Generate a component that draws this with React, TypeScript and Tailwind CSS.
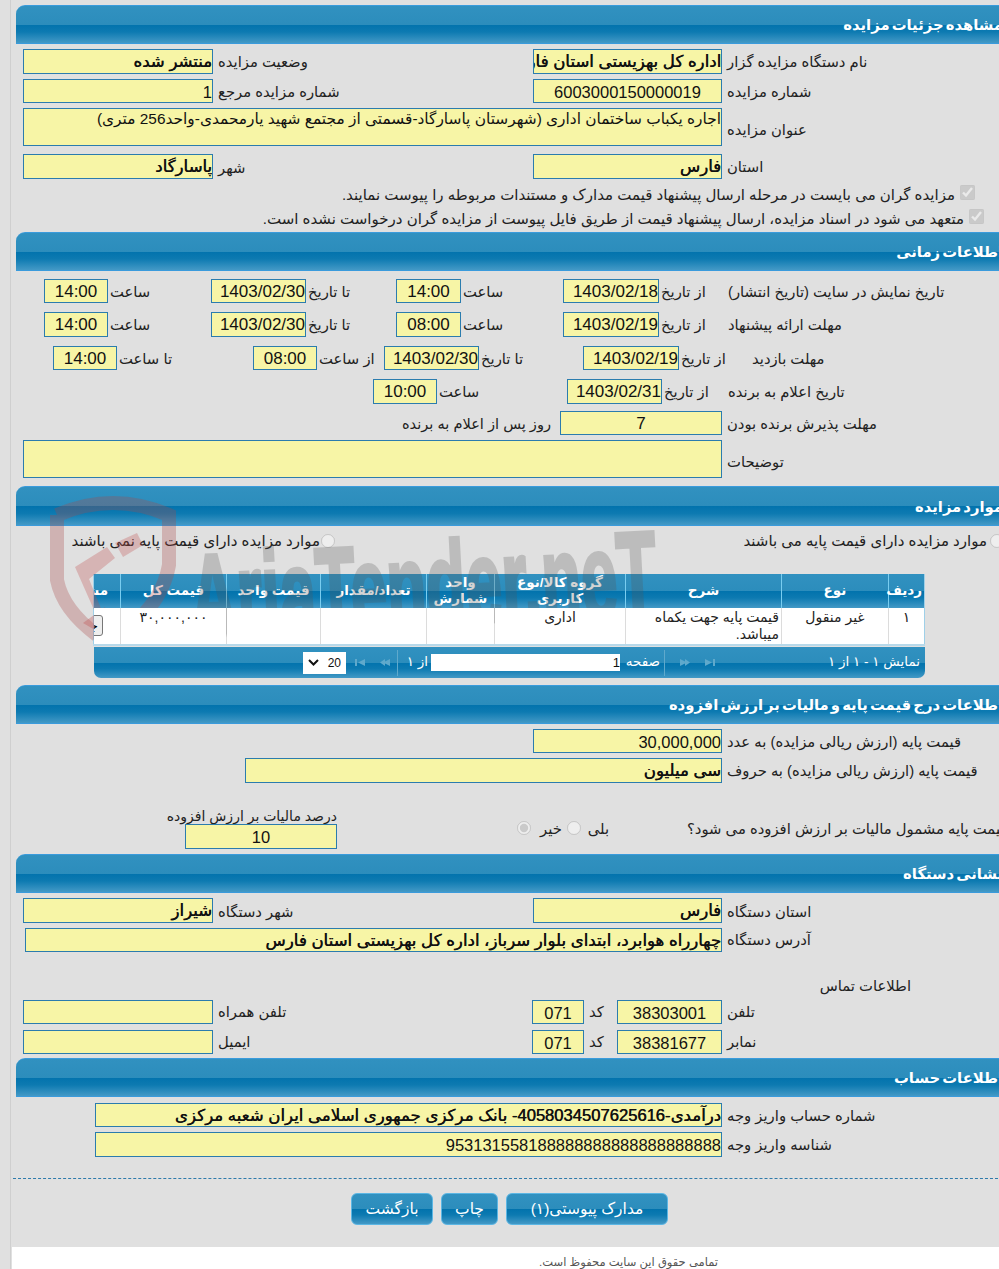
import type { ReactNode } from "react";

const barBg =
  "bg-[linear-gradient(#3191c0_0%,#2c8dbc_50%,#0273ad_51%,#0d7ab1_70%,#4399c6_100%)]";

function Section({ title }: { title: string }) {
  return (
    <div
      dir="rtl"
      className={`h-[39px] w-[990px] shrink-0 rounded-tl-[9px] border-y border-[#3a9bdc] pr-[3px] pt-[9px] text-[14.8px] font-bold leading-[20px] text-white [word-spacing:-2px] ${barBg}`}
    >
      {title}
    </div>
  );
}

function Field({
  className,
  children,
  center,
  bold,
  large,
}: {
  className: string;
  children?: ReactNode;
  center?: boolean;
  bold?: boolean;
  large?: boolean;
}) {
  return (
    <div
      dir="rtl"
      className={`shrink-0 overflow-hidden whitespace-nowrap border border-[#2b7cae] bg-[#f7f5a6] leading-[24px] text-[#111] ${
        center ? "text-center" : "text-right"
      } ${bold ? "text-[16.6px] [text-shadow:0.5px_0_0_#111]" : large ? "text-[17px]" : "text-[16.5px]"} ${className}`}
    >
      {children}
    </div>
  );
}

function Label({ className, tight, children }: { className?: string; tight?: boolean; children: ReactNode }) {
  return (
    <div
      dir="rtl"
      className={`shrink-0 whitespace-nowrap pt-[1px] text-left text-[14.8px] text-[#222] ${tight ? "pl-[2px]" : "pl-[5px]"} ${className ?? ""}`}
    >
      {children}
    </div>
  );
}

function Tri({ flip, bar }: { flip?: boolean; bar?: boolean }) {
  return (
    <svg width="11" height="9" viewBox="0 0 11 9" className={flip ? "-scale-x-100" : ""}>
      <path d="M10 1 L3 4.5 L10 8 Z" fill="#5fa9cc" />
      {bar ? <rect x="0" y="1" width="2" height="7" fill="#5fa9cc" /> : <path d="M5 1 L0 4.5 L5 8 Z" fill="#5fa9cc" />}
    </svg>
  );
}

function Watermark() {
  return (
    <div className="pointer-events-none absolute left-[45px] top-[495px] h-[170px] w-[620px]">
      <svg width="140" height="160" viewBox="0 0 140 160" className="absolute left-0 top-0">
        <path
          d="M12 20 Q68 -4 124 20 L124 70 Q118 105 85 132 M12 20 L12 85 Q18 115 52 140"
          fill="none"
          stroke="#a84a4a"
          strokeOpacity="0.3"
          strokeWidth="14"
        />
        <path d="M30 72 L62 52 L70 63 L44 84 L66 138 L61 142 L30 72 Z" fill="#c05050" fillOpacity="0.3" />
        <path d="M70 48 L92 38 L98 50 L78 62 Z" fill="#c05050" fillOpacity="0.3" />
        <path d="M38 128 L62 142 L60 112 Z" fill="#c05050" fillOpacity="0.35" />
      </svg>
      <div className="absolute left-[145px] top-[42px] origin-left -rotate-[3deg] scale-x-[0.54] whitespace-nowrap font-['Liberation_Sans',sans-serif] text-[120px] font-bold leading-[120px] text-[#555] opacity-[0.25] [-webkit-text-stroke:4px_#555]">
        AriaTender.neT
      </div>
    </div>
  );
}

const headCell = "border-l border-[#79cdf0] px-[2px] text-center text-[13.5px] font-bold leading-[16px] text-white";
const bodyCell = "border-l border-[#dcdcdc] px-[2px] pt-[1px] align-top text-[14px] leading-[17px] text-[#222]";

function BidTable() {
  return (
    <div className="ml-[77px] mt-[23px] w-[831px]">
      <table dir="rtl" className="w-[831px] table-fixed border-collapse border-x border-[#9fd0e8]">
        <colgroup>
          <col className="w-[36px]" />
          <col className="w-[107px]" />
          <col className="w-[156px]" />
          <col className="w-[131px]" />
          <col className="w-[68px]" />
          <col className="w-[106px]" />
          <col className="w-[94px]" />
          <col className="w-[106px]" />
          <col className="w-[27px]" />
        </colgroup>
        <thead>
          <tr className={`h-[34px] ${barBg}`}>
            <th className={headCell}>ردیف</th>
            <th className={headCell}>نوع</th>
            <th className={headCell}>شرح</th>
            <th className={headCell}>گروه کالا/نوع کاربری</th>
            <th className={headCell}>واحد شمارش</th>
            <th className={headCell}>تعداد/مقدار</th>
            <th className={headCell}>قیمت واحد</th>
            <th className={headCell}>قیمت کل</th>
            <th className="overflow-hidden whitespace-nowrap pr-[12px] text-right text-[13.5px] font-bold text-white">مشاهده</th>
          </tr>
        </thead>
        <tbody className="relative z-10 bg-white">
          <tr className="h-[37px] border-b-[2px] border-[#b7d9ea] bg-white">
            <td className={`${bodyCell} text-center`}>۱</td>
            <td className={`${bodyCell} text-center`}>غیر منقول</td>
            <td className={`${bodyCell} text-right`}>قیمت پایه جهت یکماه میباشد.</td>
            <td className={`${bodyCell} text-center`}>اداری</td>
            <td className={bodyCell} />
            <td className={bodyCell} />
            <td className={bodyCell} />
            <td className={`${bodyCell} text-center`}>۳۰,۰۰۰,۰۰۰</td>
            <td className="overflow-hidden p-0 align-top">
              <div className="mr-[17px] mt-[7px] h-[21px] w-[40px] overflow-hidden whitespace-nowrap rounded-[3px] border border-[#777] bg-[#eee] pr-[4px] text-[13px] leading-[19px]">
                جزئیات
              </div>
            </td>
          </tr>
        </tbody>
      </table>
      <div
        dir="rtl"
        className={`ml-[1px] mt-[1px] flex h-[31px] w-[831px] items-center rounded-b-[7px] text-[13.5px] text-white ${barBg}`}
      >
        <div className="w-[101px] shrink-0 whitespace-nowrap pr-[5px]">نمایش ۱ - ۱ از ۱</div>
        <div className="mr-[109px] flex items-center gap-[14px]">
          <Tri flip bar />
          <Tri flip />
        </div>
        <div className="mr-[14px] h-[26px] w-[1px] bg-[#5fa9cc]" />
        <span className="mr-[4px] w-[35px] shrink-0 whitespace-nowrap">صفحه</span>
        <div className="mr-[5px] h-[17px] w-[189px] shrink-0 bg-white text-right text-[13px] leading-[17px] text-[#111]">1</div>
        <span className="mr-[3px] w-[22px] shrink-0 whitespace-nowrap">از ۱</span>
        <div className="mr-[8px] h-[26px] w-[1px] bg-[#5fa9cc]" />
        <div className="mr-[6px] flex items-center gap-[14px]">
          <Tri />
          <Tri bar />
        </div>
        <div className="mr-[9px] flex h-[22px] w-[43px] shrink-0 items-center justify-between bg-white px-[5px] text-[12px] text-[#111]">
          <span>20</span>
          <svg width="11" height="7" viewBox="0 0 11 7">
            <path d="M1 1 L5.5 5.5 L10 1" fill="none" stroke="#111" strokeWidth="2" />
          </svg>
        </div>
      </div>
    </div>
  );
}

function ActionButton({ className, children }: { className: string; children: ReactNode }) {
  return (
    <button
      dir="rtl"
      className={`h-[32px] rounded-[6px] border border-[#5bb6e4] text-[15.5px] text-white ${barBg} ${className}`}
    >
      {children}
    </button>
  );
}

export default function App() {
  return (
    <div className="relative flex h-[1269px] w-[999px] overflow-hidden bg-[#e0e0e0] font-['Liberation_Sans','DejaVu_Sans',sans-serif]">
      <div className="h-full w-[11px] shrink-0 border-r border-[#cfcfcf]" />
      <div className="flex w-[988px] shrink-0 flex-col pl-[5px] pt-[5px]">
        <Section title="مشاهده جزئیات مزایده" />
        <div className="flex flex-col pl-[7px]">
          <div className="mt-[5px] flex h-[25px]">
            <Field className="w-[190px]" bold>منتشر شده</Field>
            <Label className="w-[320px] leading-[25px]">وضعیت مزایده</Label>
            <Field className="w-[189px]" bold>اداره کل بهزیستی استان فارس</Field>
            <Label className="leading-[25px]">نام دستگاه مزایده گزار</Label>
          </div>
          <div className="mt-[5px] flex h-[24px]">
            <Field className="w-[190px]">1</Field>
            <Label className="w-[320px] leading-[25px]">شماره مزایده مرجع</Label>
            <Field className="w-[189px]" center>6003000150000019</Field>
            <Label className="leading-[25px]">شماره مزایده</Label>
          </div>
          <div className="mt-[5px] flex h-[38px]">
            <Field className="w-[699px]">
              <span className="block text-[15.4px] leading-[19px]">اجاره یکباب ساختمان اداری (شهرستان پاسارگاد-قسمتی از مجتمع شهید یارمحمدی-واحد256 متری)</span>
            </Field>
            <Label className="leading-[42px]">عنوان مزایده</Label>
          </div>
          <div className="mt-[8px] flex h-[25px]">
            <Field className="w-[190px]" bold>پاسارگاد</Field>
            <Label className="w-[320px] leading-[27px]">شهر</Label>
            <Field className="w-[189px]" bold>فارس</Field>
            <Label className="leading-[25px]">استان</Label>
          </div>
          <div dir="rtl" className="mt-[3px] flex h-[24px] items-center whitespace-nowrap pr-[24px] pt-[2px] text-[15px] text-[#222]">
            <input type="checkbox" checked disabled readOnly className="-mt-[5px] ml-[5px] h-[15px] w-[15px] shrink-0" />
            مزایده گران می بایست در مرحله ارسال پیشنهاد قیمت مدارک و مستندات مربوطه را پیوست نمایند.
          </div>
          <div dir="rtl" className="flex h-[24px] items-center whitespace-nowrap pr-[15px] pt-[2px] text-[15px] text-[#222]">
            <input type="checkbox" checked disabled readOnly className="-mt-[5px] ml-[5px] h-[15px] w-[15px] shrink-0" />
            متعهد می شود در اسناد مزایده، ارسال پیشنهاد قیمت از طریق فایل پیوست از مزایده گران درخواست نشده است.
          </div>
        </div>

        <div className="mt-[2px]">
          <Section title="اطلاعات زمانی" />
        </div>
        <div className="flex flex-col pl-[7px]">
          <div className="ml-[21px] mt-[8px] flex h-[24px]">
            <Field className="w-[64px]" center large>14:00</Field>
            <Label tight className="w-[103px] leading-[25px]">ساعت</Label>
            <Field className="w-[95px]" large>1403/02/30</Field>
            <Label tight className="w-[90px] leading-[25px]">تا تاریخ</Label>
            <Field className="w-[65px]" center large>14:00</Field>
            <Label tight className="w-[102px] leading-[25px]">ساعت</Label>
            <Field className="w-[96px]" large>1403/02/18</Field>
            <Label tight className="w-[64px] leading-[25px]">از تاریخ</Label>
            <Label className="leading-[25px]">تاریخ نمایش در سایت (تاریخ انتشار)</Label>
          </div>
          <div className="ml-[21px] mt-[9px] flex h-[25px]">
            <Field className="w-[64px]" center large>14:00</Field>
            <Label tight className="w-[103px] leading-[25px]">ساعت</Label>
            <Field className="w-[95px]" large>1403/02/30</Field>
            <Label tight className="w-[90px] leading-[25px]">تا تاریخ</Label>
            <Field className="w-[65px]" center large>08:00</Field>
            <Label tight className="w-[102px] leading-[25px]">ساعت</Label>
            <Field className="w-[96px]" large>1403/02/19</Field>
            <Label tight className="w-[64px] leading-[25px]">از تاریخ</Label>
            <Label className="leading-[25px]">مهلت ارائه پیشنهاد</Label>
          </div>
          <div className="ml-[30px] mt-[9px] flex h-[24px]">
            <Field className="w-[64px]" center large>14:00</Field>
            <Label tight className="w-[136px] leading-[25px]">تا ساعت</Label>
            <Field className="w-[64px]" center large>08:00</Field>
            <Label tight className="w-[67px] leading-[25px]">از ساعت</Label>
            <Field className="w-[95px]" large>1403/02/30</Field>
            <Label tight className="w-[104px] leading-[25px]">تا تاریخ</Label>
            <Field className="w-[96px]" large>1403/02/19</Field>
            <Label tight className="w-[68px] leading-[25px]">از تاریخ</Label>
            <Label className="leading-[25px]">مهلت بازدید</Label>
          </div>
          <div className="ml-[350px] mt-[9px] flex h-[25px]">
            <Field className="w-[64px]" center large>10:00</Field>
            <Label tight className="w-[130px] leading-[25px]">ساعت</Label>
            <Field className="w-[95px]" large>1403/02/31</Field>
            <Label tight className="w-[61px] leading-[25px]">از تاریخ</Label>
            <Label className="leading-[25px]">تاریخ اعلام به برنده</Label>
          </div>
          <div className="mt-[7px] flex h-[24px]">
            <div dir="rtl" className="w-[528px] text-right text-[14.6px] leading-[27px] text-[#222]">
              روز پس از اعلام به برنده
            </div>
            <Field className="ml-[9px] w-[162px]" center large>7</Field>
            <Label className="leading-[25px]">مهلت پذیرش برنده بودن</Label>
          </div>
          <div className="mt-[5px] flex h-[38px]">
            <Field className="w-[699px]" />
            <Label className="leading-[42px]">توضیحات</Label>
          </div>
        </div>

        <div className="mt-[8px]">
          <div
            dir="rtl"
            className={`h-[40px] w-[990px] rounded-tl-[9px] border-y border-[#3a9bdc] pr-[3px] pt-[10px] text-[14.8px] font-bold leading-[20px] text-white [word-spacing:-2px] ${barBg}`}
          >
            موارد مزایده
          </div>
        </div>
        <div className="mt-[5px] flex h-[20px] items-center pl-[54px] text-[15px] text-[#222]">
          <div dir="rtl" className="w-[250px] shrink-0 whitespace-nowrap text-right">موارد مزایده دارای قیمت پایه نمی باشند</div>
          <input type="radio" disabled className="ml-[1px] h-[14px] w-[14px] shrink-0" />
          <div dir="rtl" className="ml-[407px] w-[245px] shrink-0 whitespace-nowrap text-right">موارد مزایده دارای قیمت پایه می باشند</div>
          <input type="radio" disabled className="ml-[3px] h-[14px] w-[14px] shrink-0" />
        </div>
        <BidTable />

        <div className="mt-[7px]">
          <Section title="اطلاعات درج قیمت پایه و مالیات بر ارزش افزوده" />
        </div>
        <div className="flex flex-col pl-[7px]">
          <div className="ml-[510px] mt-[5px] flex h-[24px]">
            <Field className="w-[189px]">30,000,000</Field>
            <Label className="leading-[25px]">قیمت پایه (ارزش ریالی مزایده) به عدد</Label>
          </div>
          <div className="ml-[222px] mt-[5px] flex h-[25px]">
            <Field className="w-[477px]" bold>سی میلیون</Field>
            <Label className="leading-[25px]">قیمت پایه (ارزش ریالی مزایده) به حروف</Label>
          </div>
          <div className="ml-[146px] mt-[25px] flex h-[41px] items-end">
            <div className="flex w-[168px] shrink-0 flex-col items-end">
              <div dir="rtl" className="h-[16px] whitespace-nowrap text-[14px] leading-[16px] text-[#222]">درصد مالیات بر ارزش افزوده</div>
              <Field className="h-[25px] w-[152px]" center>10</Field>
            </div>
            <div className="mb-[7px] ml-[180px] flex h-[25px] w-[94px] shrink-0 items-center text-[14.8px] text-[#222]">
              <input type="radio" checked disabled readOnly className="-mt-[4px] h-[14px] w-[14px]" />
              <span className="ml-[9px]">خیر</span>
              <input type="radio" disabled className="-mt-[4px] ml-[5px] h-[14px] w-[14px]" />
              <span className="ml-[7px]">بلی</span>
            </div>
            <div className="mb-[7px] ml-[76px] flex h-[25px] w-[340px] shrink-0 items-center whitespace-nowrap text-[14.8px] text-[#222]">
              <span dir="rtl">قیمت پایه مشمول مالیات بر ارزش افزوده می شود؟</span>
            </div>
          </div>
        </div>

        <div className="mt-[5px]">
          <Section title="نشانی دستگاه" />
        </div>
        <div className="flex flex-col pl-[7px]">
          <div className="mt-[5px] flex h-[25px]">
            <Field className="w-[190px]" bold>شیراز</Field>
            <Label className="w-[320px] leading-[27px]">شهر دستگاه</Label>
            <Field className="w-[189px]" bold>فارس</Field>
            <Label className="leading-[27px]">استان دستگاه</Label>
          </div>
          <div className="ml-[2px] mt-[5px] flex h-[24px]">
            <Field className="w-[697px]" bold>چهارراه هوابرد، ابتدای بلوار سرباز، اداره کل بهزیستی استان فارس</Field>
            <Label className="leading-[23px]">آدرس دستگاه</Label>
          </div>
          <div dir="rtl" className="ml-[798px] mt-[24px] h-[20px] w-[90px] whitespace-nowrap text-left text-[14.8px] leading-[20px] text-[#222]">
            اطلاعات تماس
          </div>
          <div className="mt-[4px] flex h-[24px]">
            <Field className="w-[190px]" />
            <Label className="w-[319px] leading-[23px]">تلفن همراه</Label>
            <Field className="w-[52px]" center>071</Field>
            <Label className="w-[33px] leading-[23px]">کد</Label>
            <Field className="w-[105px]" center>38303001</Field>
            <Label className="leading-[23px]">تلفن</Label>
          </div>
          <div className="mt-[6px] flex h-[24px]">
            <Field className="w-[190px]" />
            <Label className="w-[319px] leading-[23px]">ایمیل</Label>
            <Field className="w-[52px]" center>071</Field>
            <Label className="w-[33px] leading-[23px]">کد</Label>
            <Field className="w-[105px]" center>38381677</Field>
            <Label className="leading-[23px]">نمابر</Label>
          </div>
        </div>

        <div className="mt-[4px]">
          <Section title="اطلاعات حساب" />
        </div>
        <div className="flex flex-col pl-[7px]">
          <div className="ml-[72px] mt-[6px] flex h-[24px]">
            <Field className="w-[627px]" bold>درآمدی-4058034507625616- بانک مرکزی جمهوری اسلامی ایران شعبه مرکزی</Field>
            <Label className="leading-[25px]">شماره حساب واریز وجه</Label>
          </div>
          <div className="ml-[72px] mt-[5px] flex h-[25px]">
            <Field className="w-[627px]">953131558188888888888888888888</Field>
            <Label className="leading-[25px]">شناسه واریز وجه</Label>
          </div>
        </div>
        <div className="-ml-[3px] mt-[21px] w-[990px] border-t border-dashed border-[#2f7bab]" />
        <div className="ml-[335px] mt-[14px] flex gap-[8px]">
          <ActionButton className="w-[82px]">بازگشت</ActionButton>
          <ActionButton className="w-[57px]">چاپ</ActionButton>
          <ActionButton className="w-[162px]">مدارک پیوستی(۱)</ActionButton>
        </div>
        <div dir="rtl" className="-ml-[4px] mt-[22px] h-[30px] w-[987px] bg-white pr-[281px] pt-[7px] text-[11.5px] text-[#555]">
          تمامی حقوق این سایت محفوظ است.
        </div>
      </div>
      <Watermark />
    </div>
  );
}
